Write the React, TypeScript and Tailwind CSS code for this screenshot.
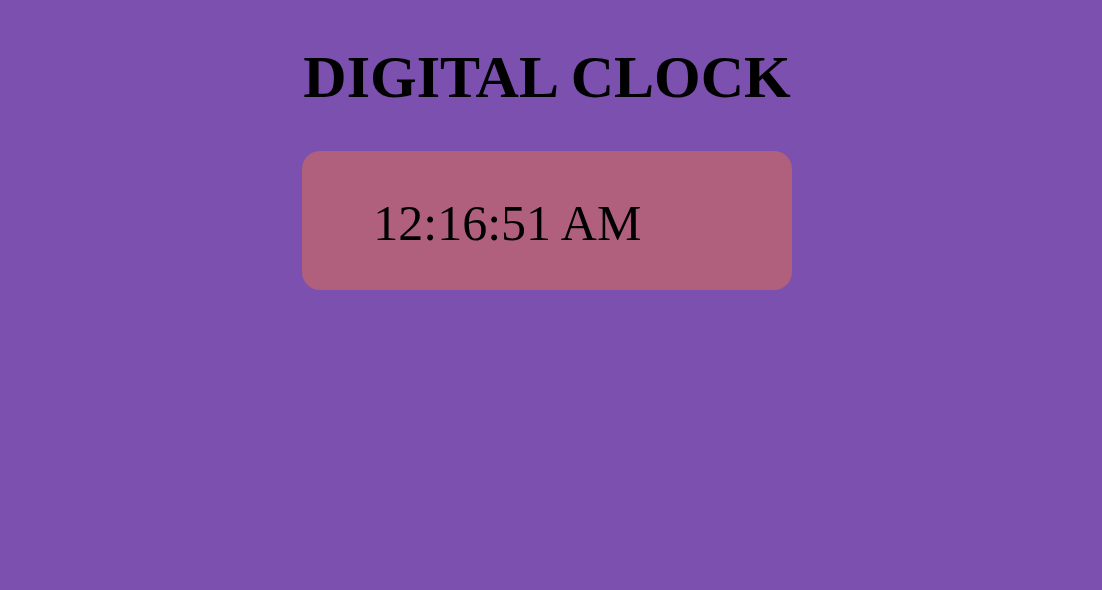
export default function App() {
  const time = "12:16:51 AM";

  return (
    <div className="min-h-[590px] w-full bg-[#7b50ae] font-['Liberation_Serif',serif] text-black">
      <div className="flex justify-center pr-[8px] pt-[43px]">
        <div className="flex flex-col">
          {/* Title */}
          <h1 className="mb-[39px] px-px text-[60px] font-bold leading-[69px]">DIGITAL CLOCK</h1>

          {/* Clock face */}
          <div className="rounded-[18px] bg-[#b05f7c] pt-[44px] pb-[38px] pl-[71px]">
            <p className="text-[50px] leading-[57px]">{time}</p>
          </div>
        </div>
      </div>
    </div>
  );
}
